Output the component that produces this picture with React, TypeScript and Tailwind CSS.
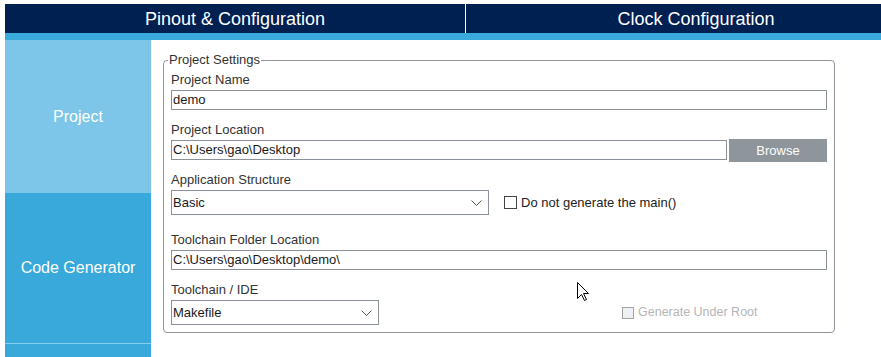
import React from "react";

const Label = ({ children, className = "" }: { children: React.ReactNode; className?: string }) => (
  <div className={`h-[15px] text-[13px] leading-[15px] text-[#333] ${className}`}>{children}</div>
);

const Input = ({ value, className = "" }: { value: string; className?: string }) => (
  <div
    className={`h-[20px] border border-[#8a9198] pl-[1px] text-[13px] leading-[18px] text-[#1a1a1a] ${className}`}
  >
    {value}
  </div>
);

const Select = ({ value, width }: { value: string; width: string }) => (
  <div
    className={`flex h-[25px] items-center justify-between border border-[#8a9198] pl-[1px] pr-[6px] text-[13px] text-[#1a1a1a] ${width}`}
  >
    <span>{value}</span>
    <svg width="11" height="6" viewBox="0 0 11 6" fill="none">
      <path d="M0.5 0.5 L5.5 5.5 L10.5 0.5" stroke="#555" strokeWidth="1" />
    </svg>
  </div>
);

export default function App() {
  return (
    <div className="relative h-[357px] w-[881px] overflow-hidden bg-white pl-[5px] pt-[4px] font-['Liberation_Sans',Arial,sans-serif]">
      {/* top tabs */}
      <div className="flex h-[29px] w-[922px] bg-[#002052] text-[18px] text-white">
        <div className="flex w-[461px] items-center justify-center border-r border-white pt-[1px]">
          Pinout &amp; Configuration
        </div>
        <div className="flex w-[460px] items-center justify-center pt-[1px]">Clock Configuration</div>
      </div>
      <div className="h-[7px] bg-[#3aa9dc]" />

      <div className="flex h-[317px]">
        {/* sidebar */}
        <div className="flex w-[146px] flex-col text-[16px] text-white">
          <div className="flex h-[153px] items-center justify-center bg-[#7dc6ea]">Project</div>
          <div className="flex h-[150px] items-center justify-center bg-[#39a9db]">Code Generator</div>
          <div className="h-[1px] bg-[#86ccee]" />
          <div className="flex-1 bg-[#39a9db]" />
        </div>

        {/* settings */}
        <div className="flex-1 pl-[12px] pt-[12px]">
          <fieldset className="w-[672px] rounded-[4px] border border-[#8f959b] px-[7px] pb-[7px]">
            <legend className="ml-[-3px] px-[1px] text-[13px] leading-[16px] text-[#333]">Project Settings</legend>

            <Label className="mt-[4px]">Project Name</Label>
            <Input value="demo" className="mt-[3px]" />

            <Label className="mt-[12px]">Project Location</Label>
            <div className="mt-[2px] flex items-start">
              <Input value="C:\Users\gao\Desktop" className="mt-[1px] flex-1" />
              <div className="ml-[2px] flex h-[23px] w-[98px] items-center justify-center bg-[#8e959b] text-[13px] text-white">
                Browse
              </div>
            </div>

            <Label className="mt-[10px]">Application Structure</Label>
            <div className="mt-[3px] flex items-center">
              <Select value="Basic" width="w-[318px]" />
              <div className="ml-[15px] h-[13px] w-[13px] border border-[#444] bg-white" />
              <span className="ml-[4px] text-[13px] text-[#222]">Do not generate the main()</span>
            </div>

            <Label className="mt-[17px]">Toolchain Folder Location</Label>
            <Input value="C:\Users\gao\Desktop\demo\" className="mt-[3px]" />

            <Label className="mt-[12px]">Toolchain / IDE</Label>
            <div className="mt-[3px] flex items-center">
              <Select value="Makefile" width="w-[208px]" />
              <div className="ml-[243px] h-[12px] w-[12px] border border-[#a3a3a3] bg-[#eef0f3]" />
              <span className="ml-[4px] text-[12.5px] text-[#b5b5b5]">Generate Under Root</span>
            </div>
          </fieldset>
        </div>
      </div>

      {/* mouse pointer */}
      <svg className="absolute left-[577px] top-[282px]" width="13" height="20" viewBox="0 0 13 20">
        <path
          d="M0.5 0.5 L0.5 16.5 L4.5 12.5 L7.5 18.5 L9.5 17.5 L6.5 11.5 L11.5 11.5 Z"
          fill="white"
          stroke="black"
          strokeWidth="1"
        />
      </svg>
    </div>
  );
}
